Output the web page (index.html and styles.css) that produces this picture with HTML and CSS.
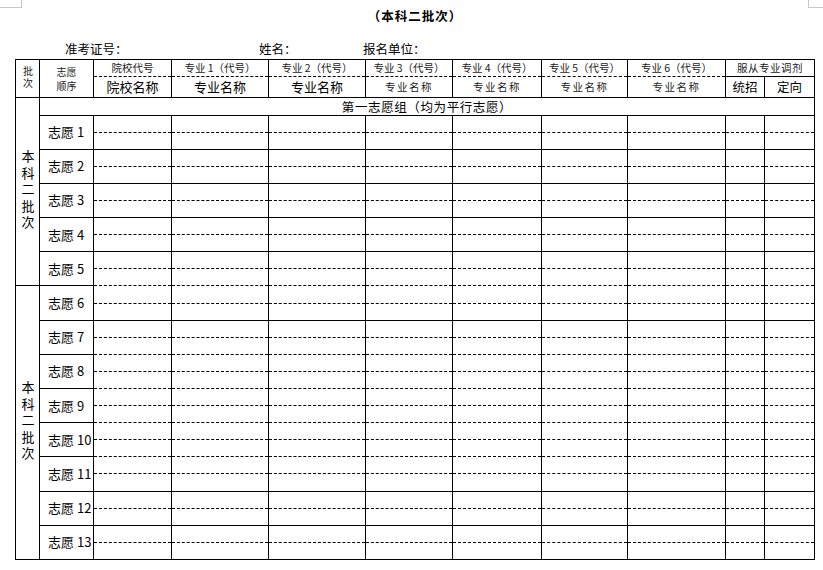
FILE: index.html
```html
<!DOCTYPE html>
<html lang="zh">
<head>
<meta charset="utf-8">
<link rel="stylesheet" href="styles.css">
</head>
<body>
<div class="page">
  <span class="mark mark-l"></span>
  <span class="mark mark-r"></span>
  <h1 class="title">（本科二批次）</h1>
  <div class="info">
    <span class="f1">准考证号：</span>
    <span class="f2">姓名：</span>
    <span class="f3">报名单位：</span>
  </div>
  <table class="form">
    <colgroup>
      <col class="c-pc"><col class="c-sx"><col class="c-yx"><col class="c-z1"><col class="c-z2"><col class="c-z3"><col class="c-z4"><col class="c-z5"><col class="c-z6"><col class="c-tz"><col class="c-dx">
    </colgroup>
    <thead>
      <tr class="h1">
        <th rowspan="2" class="pc"><span class="vt">批次</span></th>
        <th rowspan="2" class="sx"><span class="ln">志愿</span><span class="ln">顺序</span></th>
        <th class="code">院校代号</th>
        <th class="code">专业 1（代号）</th>
        <th class="code">专业 2（代号）</th>
        <th class="code">专业 3（代号）</th>
        <th class="code">专业 4（代号）</th>
        <th class="code">专业 5（代号）</th>
        <th class="code">专业 6（代号）</th>
        <th colspan="2" class="fc">服从专业调剂</th>
      </tr>
      <tr class="h2">
        <th class="nm big">院校名称</th>
        <th class="nm big">专业名称</th>
        <th class="nm big">专业名称</th>
        <th class="nm sm">专业名称</th>
        <th class="nm sm">专业名称</th>
        <th class="nm sm">专业名称</th>
        <th class="nm sm">专业名称</th>
        <th class="tz">统招</th>
        <th class="tz">定向</th>
      </tr>
    </thead>
    <tbody>
      <tr class="group">
        <td rowspan="11" class="batch"><span class="vt">本科二批次</span></td>
        <td colspan="10" class="gt">第一志愿组（均为平行志愿）</td>
      </tr>
      <tr class="top"><td rowspan="2" class="lb">志愿 1</td><td class="d"></td><td class="d"></td><td class="d"></td><td class="d"></td><td class="d"></td><td class="d"></td><td class="d"></td><td class="d"></td><td class="d"></td></tr>
      <tr class="bot"><td class="d"></td><td class="d"></td><td class="d"></td><td class="d"></td><td class="d"></td><td class="d"></td><td class="d"></td><td class="d"></td><td class="d"></td></tr>
      <tr class="top"><td rowspan="2" class="lb">志愿 2</td><td class="d"></td><td class="d"></td><td class="d"></td><td class="d"></td><td class="d"></td><td class="d"></td><td class="d"></td><td class="d"></td><td class="d"></td></tr>
      <tr class="bot"><td class="d"></td><td class="d"></td><td class="d"></td><td class="d"></td><td class="d"></td><td class="d"></td><td class="d"></td><td class="d"></td><td class="d"></td></tr>
      <tr class="top"><td rowspan="2" class="lb">志愿 3</td><td class="d"></td><td class="d"></td><td class="d"></td><td class="d"></td><td class="d"></td><td class="d"></td><td class="d"></td><td class="d"></td><td class="d"></td></tr>
      <tr class="bot"><td class="d"></td><td class="d"></td><td class="d"></td><td class="d"></td><td class="d"></td><td class="d"></td><td class="d"></td><td class="d"></td><td class="d"></td></tr>
      <tr class="top"><td rowspan="2" class="lb">志愿 4</td><td class="d"></td><td class="d"></td><td class="d"></td><td class="d"></td><td class="d"></td><td class="d"></td><td class="d"></td><td class="d"></td><td class="d"></td></tr>
      <tr class="bot"><td class="d"></td><td class="d"></td><td class="d"></td><td class="d"></td><td class="d"></td><td class="d"></td><td class="d"></td><td class="d"></td><td class="d"></td></tr>
      <tr class="top"><td rowspan="2" class="lb">志愿 5</td><td class="d"></td><td class="d"></td><td class="d"></td><td class="d"></td><td class="d"></td><td class="d"></td><td class="d"></td><td class="d"></td><td class="d"></td></tr>
      <tr class="bot soft"><td class="d"></td><td class="d"></td><td class="d"></td><td class="d"></td><td class="d"></td><td class="d"></td><td class="d"></td><td class="d"></td><td class="d"></td></tr>
      <tr class="top softtop"><td rowspan="16" class="batch"><span class="vt">本科二批次</span></td><td rowspan="2" class="lb">志愿 6</td><td class="d"></td><td class="d"></td><td class="d"></td><td class="d"></td><td class="d"></td><td class="d"></td><td class="d"></td><td class="d"></td><td class="d"></td></tr>
      <tr class="bot"><td class="d"></td><td class="d"></td><td class="d"></td><td class="d"></td><td class="d"></td><td class="d"></td><td class="d"></td><td class="d"></td><td class="d"></td></tr>
      <tr class="top"><td rowspan="2" class="lb">志愿 7</td><td class="d"></td><td class="d"></td><td class="d"></td><td class="d"></td><td class="d"></td><td class="d"></td><td class="d"></td><td class="d"></td><td class="d"></td></tr>
      <tr class="bot soft"><td class="d"></td><td class="d"></td><td class="d"></td><td class="d"></td><td class="d"></td><td class="d"></td><td class="d"></td><td class="d"></td><td class="d"></td></tr>
      <tr class="top softtop"><td rowspan="2" class="lb">志愿 8</td><td class="d"></td><td class="d"></td><td class="d"></td><td class="d"></td><td class="d"></td><td class="d"></td><td class="d"></td><td class="d"></td><td class="d"></td></tr>
      <tr class="bot soft"><td class="d"></td><td class="d"></td><td class="d"></td><td class="d"></td><td class="d"></td><td class="d"></td><td class="d"></td><td class="d"></td><td class="d"></td></tr>
      <tr class="top softtop"><td rowspan="2" class="lb">志愿 9</td><td class="d"></td><td class="d"></td><td class="d"></td><td class="d"></td><td class="d"></td><td class="d"></td><td class="d"></td><td class="d"></td><td class="d"></td></tr>
      <tr class="bot soft"><td class="d"></td><td class="d"></td><td class="d"></td><td class="d"></td><td class="d"></td><td class="d"></td><td class="d"></td><td class="d"></td><td class="d"></td></tr>
      <tr class="top softtop"><td rowspan="2" class="lb">志愿 10</td><td class="d"></td><td class="d"></td><td class="d"></td><td class="d"></td><td class="d"></td><td class="d"></td><td class="d"></td><td class="d"></td><td class="d"></td></tr>
      <tr class="bot soft"><td class="d"></td><td class="d"></td><td class="d"></td><td class="d"></td><td class="d"></td><td class="d"></td><td class="d"></td><td class="d"></td><td class="d"></td></tr>
      <tr class="top softtop"><td rowspan="2" class="lb">志愿 11</td><td class="d"></td><td class="d"></td><td class="d"></td><td class="d"></td><td class="d"></td><td class="d"></td><td class="d"></td><td class="d"></td><td class="d"></td></tr>
      <tr class="bot"><td class="d"></td><td class="d"></td><td class="d"></td><td class="d"></td><td class="d"></td><td class="d"></td><td class="d"></td><td class="d"></td><td class="d"></td></tr>
      <tr class="top"><td rowspan="2" class="lb">志愿 12</td><td class="d"></td><td class="d"></td><td class="d"></td><td class="d"></td><td class="d"></td><td class="d"></td><td class="d"></td><td class="d"></td><td class="d"></td></tr>
      <tr class="bot"><td class="d"></td><td class="d"></td><td class="d"></td><td class="d"></td><td class="d"></td><td class="d"></td><td class="d"></td><td class="d"></td><td class="d"></td></tr>
      <tr class="top"><td rowspan="2" class="lb">志愿 13</td><td class="d"></td><td class="d"></td><td class="d"></td><td class="d"></td><td class="d"></td><td class="d"></td><td class="d"></td><td class="d"></td><td class="d"></td></tr>
      <tr class="bot"><td class="d"></td><td class="d"></td><td class="d"></td><td class="d"></td><td class="d"></td><td class="d"></td><td class="d"></td><td class="d"></td><td class="d"></td></tr>
    </tbody>
  </table>
</div>
</body>
</html>
```
FILE: styles.css
```css
html, body {
  margin: 0;
  padding: 0;
  background: #fff;
}
body {
  font-family: "Noto Sans CJK SC", "Liberation Sans", sans-serif;
  color: #000;
}
.page {
  position: relative;
  width: 823px;
  height: 570px;
  overflow: hidden;
}
.mark {
  position: absolute;
  top: 0;
  width: 21px;
  height: 7px;
  border-bottom: 1px solid #c8c8c8;
}
.mark-l {
  left: 0;
  border-right: 1px solid #c8c8c8;
}
.mark-r {
  left: 808px;
  width: 15px;
  border-left: 1px solid #c8c8c8;
}
.title {
  margin: 0;
  padding-top: 8px;
  padding-left: 7px;
  font-size: 12.5px;
  line-height: 16px;
  letter-spacing: 1px;
  font-weight: bold;
  text-align: center;
}
.info {
  display: flex;
  margin-top: 17px;
  padding-left: 65px;
  font-size: 12.5px;
  line-height: 16px;
  height: 18px;
}
.info .f1 { width: 194px; }
.info .f2 { width: 104px; }

.form {
  margin-left: 15px;
  border-collapse: collapse;
  table-layout: fixed;
  width: 799px;
}
.c-pc { width: 24px; }
.c-sx { width: 54px; }
.c-yx { width: 78px; }
.c-z1 { width: 97px; }
.c-z2 { width: 97px; }
.c-z3 { width: 87px; }
.c-z4 { width: 89px; }
.c-z5 { width: 86px; }
.c-z6 { width: 98px; }
.c-tz { width: 39px; }
.c-dx { width: 50px; }

.form th, .form td {
  border: 1px solid #000;
  padding: 0;
  font-weight: normal;
  text-align: center;
  vertical-align: middle;
  white-space: nowrap;
  overflow: hidden;
}
.vt {
  display: inline-block;
  writing-mode: vertical-rl;
  text-orientation: upright;
}
.h1 th { height: 16px; }
.h2 th { height: 20px; }
.pc {
  font-size: 10px;
  color: #222;
}
.pc .vt {
  letter-spacing: 2.5px;
  line-height: 12px;
  margin-top: 2px;
}
.sx {
  font-size: 10px;
  color: #222;
}
.sx .ln {
  display: block;
  line-height: 14px;
}
.code {
  font-size: 10.5px;
  line-height: 14px;
  color: #222;
  border-bottom-style: dashed !important;
}
.fc {
  font-size: 10.5px;
  line-height: 14px;
  color: #222;
  letter-spacing: 0.5px;
}
.h2 .nm { border-top-style: dashed; }
.nm.big {
  font-size: 13px;
  line-height: 16px;
}
.nm.sm {
  font-size: 10.5px;
  line-height: 14px;
  letter-spacing: 1.5px;
  color: #222;
}
.tz {
  font-size: 12.5px;
  line-height: 16px;
}
.group td.gt {
  height: 16.5px;
  font-size: 12.5px;
  line-height: 15px;
  letter-spacing: 0.6px;
}
.batch {
  font-size: 13px;
}
.batch .vt {
  letter-spacing: 3.5px;
  line-height: 16px;
  margin-top: 3px;
}
.lb {
  text-align: left !important;
  padding-left: 8px !important;
  font-size: 13px;
  line-height: 16px;
}
.top td, .bot td { height: 16.1px; }
.top td.d { border-bottom-style: dashed; }
.bot td.d { border-top-style: dashed; }
.soft td.d { border-bottom-style: dashed; }
.softtop td.d { border-top-style: dashed; }
```
